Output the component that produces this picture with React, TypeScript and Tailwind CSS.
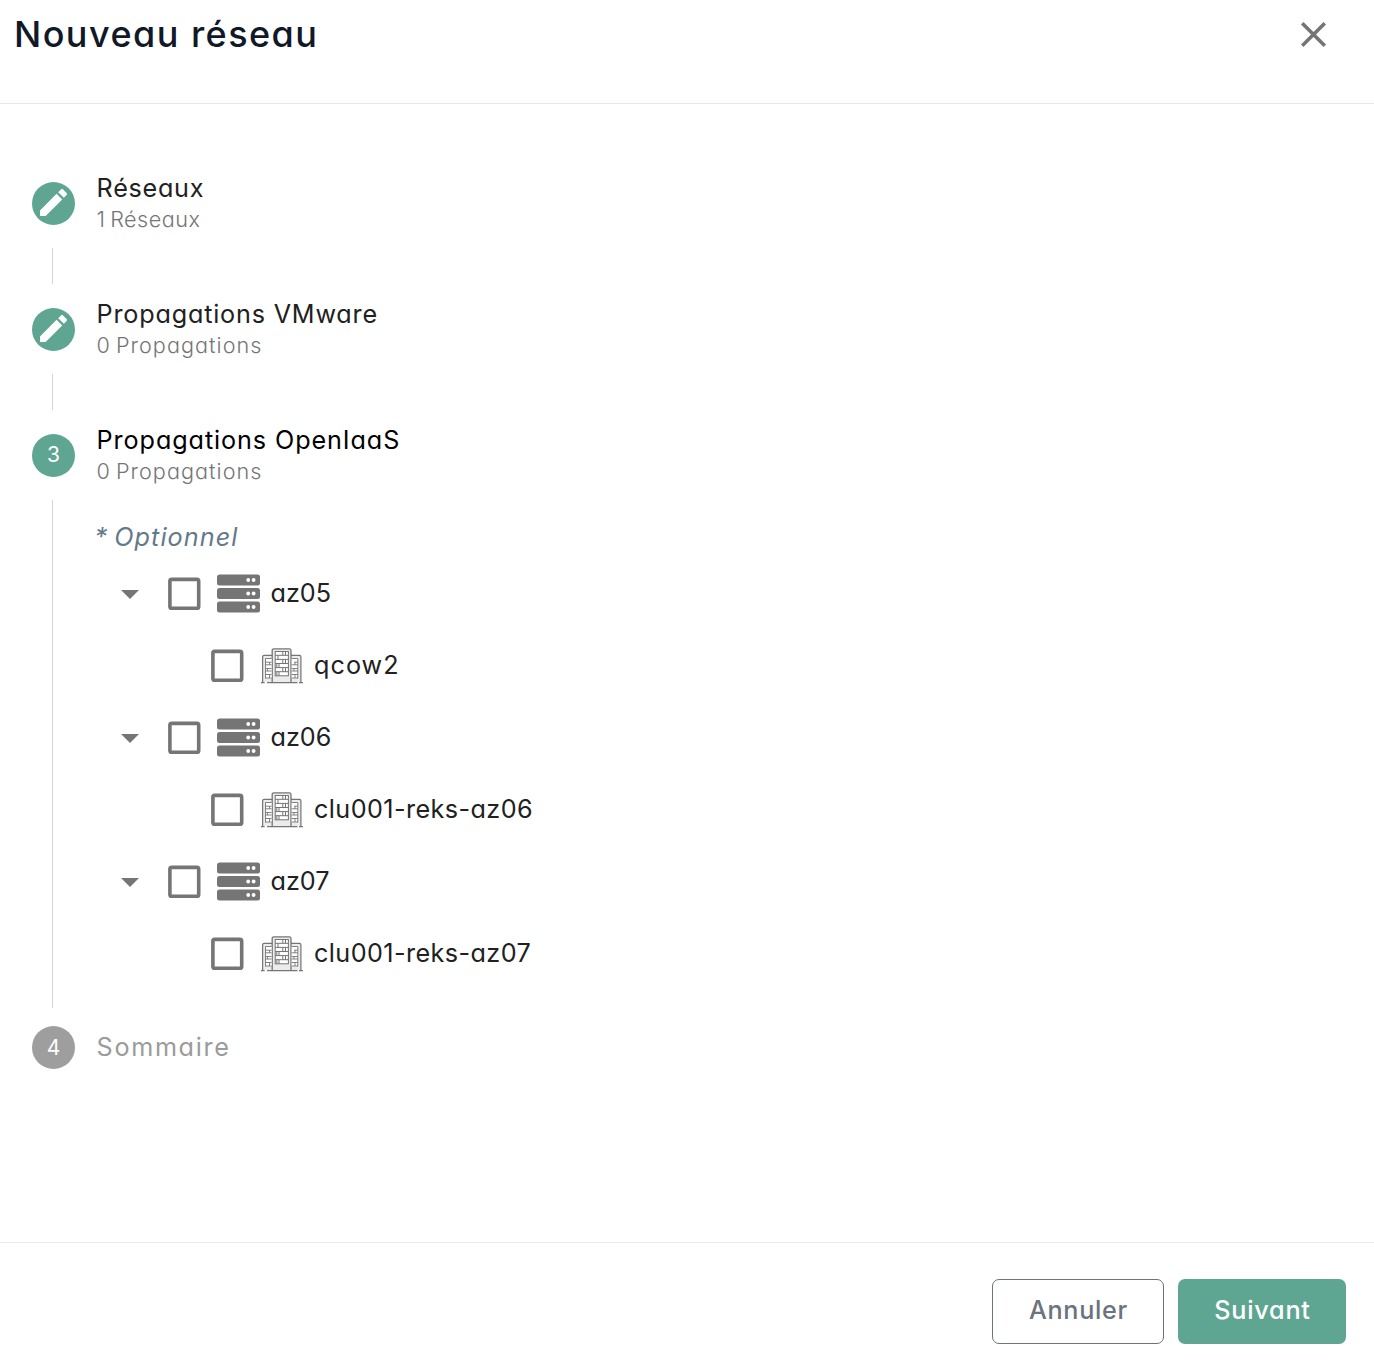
import type { ReactNode } from "react";

function CloseIcon() {
  return (
    <svg viewBox="0 0 24 24" className="h-[43px] w-[43px] fill-[#757575]">
      <path d="M19 6.41L17.59 5 12 10.59 6.41 5 5 6.41 10.59 12 5 17.59 6.41 19 12 13.41 17.59 19 19 17.59 13.41 12z" />
    </svg>
  );
}

function PencilIcon() {
  return (
    <svg viewBox="0.33 0.33 24 24" className="-mt-px h-9 w-9 fill-white">
      <path d="M3 17.25V21h3.75L17.81 9.94l-3.75-3.75L3 17.25zM20.71 7.04c.39-.39.39-1.02 0-1.41l-2.34-2.34c-.39-.39-1.02-.39-1.41 0l-1.83 1.83 3.75 3.75 1.83-1.83z" />
    </svg>
  );
}

function ServerIcon() {
  return (
    <svg viewBox="0 0 43 39" className="ml-4 h-[39px] w-[43px] shrink-0">
      {[0.6, 14.1, 27.6].map((y) => (
        <g key={y}>
          <rect x="0" y={y} width="43" height="11" rx="2.5" fill="#757575" />
          <circle cx="31.2" cy={y + 5.4} r="1.9" fill="#fff" />
          <circle cx="36.6" cy={y + 5.4} r="1.9" fill="#fff" />
        </g>
      ))}
    </svg>
  );
}

function BuildingIcon() {
  return (
    <svg viewBox="0 0 43 36" className="ml-[17px] mt-px h-9 w-[43px] shrink-0" fill="none" stroke="#757575">
      <path d="M1.6 34V9Q1.6 7.4 3.2 7.4H38.3Q39.9 7.4 39.9 9V34" fill="#ececec" strokeWidth="1.2" />
      <path d="M11.2 34V2.6Q11.2.8 13 .8H28.2Q30 .8 30 2.6V34" fill="#ececec" strokeWidth="1.3" />
      <path d="M0 34.6H3.6M6 34.6H36.5M38 34.6H42" strokeWidth="1.3" />
      <rect x="14.2" y="3.5" width="13.2" height="24.3" fill="#fff" />
      <path d="M14.2 7.3h13.2M14.2 11.4h13.2M14.2 15.5h13.2M14.2 19.6h13.2M14.2 23.7h13.2M21.8 3.5v3.8M24.5 3.5v3.8M17 7.3v4.1M21.8 11.4v4.1M24.5 11.4v4.1M15.8 15.5v4.1M18 15.5v4.1M21.8 19.6v4.1M24.5 19.6v4.1M15.8 23.7v4.1M18 23.7v4.1" />
      <path d="M4.6 10.5h6v20h-6zM30.7 10.5h6v20h-6z" fill="#fff" stroke="none" />
      <path d="M4.5 30.5V10.5H10.6M36.8 30.5V10.5H30.7M4.5 14.2h6.1M4.5 16.8h6.1M4.5 20.5h6.1M4.5 23h6.1M4.5 26.5h6.1M4.5 30h6.1M8.5 14.2v2.6M6.5 20.5v2.5M8.5 26.5v3.5M33 14.2h3.8M30.7 16.8h6.1M30.7 20.5h6.1M30.7 23h6.1M30.7 26.5h6.1M30.7 30h6.1M34 14.2v2.6M33 20.5v2.5M34 26.5v3.5" strokeWidth=".9" />
    </svg>
  );
}

function Checkbox() {
  return (
    <svg viewBox="0 0 33 33" role="checkbox" aria-checked="false" className="h-[33px] w-[33px] shrink-0">
      <rect x="1.9" y="2.4" width="28.8" height="28.8" rx="1.8" fill="none" stroke="#757575" strokeWidth="3.6" />
    </svg>
  );
}

function Caret() {
  return (
    <svg viewBox="0 0 18 9" className="ml-[25px] mr-[29px] mt-[2px] h-[9px] w-[18px] fill-[#757575]">
      <path d="M0 0h18L9 9z" />
    </svg>
  );
}

type StepProps = { badge: ReactNode; title: string; titleClass: string; subtitle: string; subtitleClass: string };

function Step({ badge, title, titleClass, subtitle, subtitleClass }: StepProps) {
  return (
    <div className="flex h-[90px] items-center gap-[22px] pl-8">
      <span className="flex h-[43px] w-[43px] items-center justify-center rounded-full bg-[#5fa692] text-[21px] text-white">{badge}</span>
      <div className="-ml-[0.4px] flex flex-col pt-px">
        <div className={`h-[31px] leading-[31px] ${titleClass}`}>{title}</div>
        <div className={`h-[31px] text-[21.6px] font-light leading-[31px] text-[#757575] ${subtitleClass}`}>{subtitle}</div>
      </div>
    </div>
  );
}

function Group({ name, child, childClass }: { name: string; child: string; childClass: string }) {
  return (
    <>
      <div className="flex h-[72px] items-center">
        <Caret />
        <Checkbox />
        <ServerIcon />
        <span className="ml-[10.5px] pt-[2px]">{name}</span>
      </div>
      <div className="flex h-[72px] items-center pl-[115px]">
        <Checkbox />
        <BuildingIcon />
        <span className={`ml-[10px] pt-[2px] ${childClass}`}>{child}</span>
      </div>
    </>
  );
}

export default function App() {
  return (
    <div className="flex h-[1362px] flex-col bg-white font-['Inter',sans-serif] text-[25.2px] text-[#212121] [font-feature-settings:'cv11']">
      <header className="flex h-[104px] items-start justify-between border-b border-[#e8e8e8] pl-[14px] pr-[39px] pt-[13px]">
        <h1 className="text-[36px] font-medium leading-[43px] tracking-[1.45px] text-[#111827]">Nouveau réseau</h1>
        <CloseIcon />
      </header>
      <main className="flex grow flex-col pt-[54px]">
        <Step
          badge={<PencilIcon />}
          title="Réseaux"
          titleClass="tracking-[0.7px]"
          subtitle="1 Réseaux"
          subtitleClass="tracking-[0.5px] [word-spacing:-2px]"
        />
        <div className="ml-[52px] h-9 w-px bg-[#d6d6d6]" />
        <Step
          badge={<PencilIcon />}
          title="Propagations VMware"
          titleClass="tracking-[0.8px]"
          subtitle="0 Propagations"
          subtitleClass="tracking-[1.05px] [word-spacing:-2.2px]"
        />
        <div className="ml-[52px] h-9 w-px bg-[#d6d6d6]" />
        <Step
          badge="3"
          title="Propagations OpenIaaS"
          titleClass="tracking-[0.9px] text-black"
          subtitle="0 Propagations"
          subtitleClass="tracking-[1.05px] [word-spacing:-2.2px]"
        />
        <div className="ml-[52px] h-[508px] border-l border-[#d6d6d6] pl-[43px] pt-[21px]">
          <div className="-ml-[1.5px] h-9 italic leading-8 tracking-[1.05px] text-[#64798a] [word-spacing:-2px]">* Optionnel</div>
          <Group name="az05" child="qcow2" childClass="tracking-[1.05px]" />
          <Group name="az06" child="clu001-reks-az06" childClass="tracking-[0.42px]" />
          <Group name="az07" child="clu001-reks-az07" childClass="tracking-[0.42px]" />
        </div>
        <div className="flex h-[78px] items-center gap-[22px] pl-8">
          <span className="flex h-[43px] w-[43px] items-center justify-center rounded-full bg-[#9e9e9e] pt-px text-[21px] text-white">4</span>
          <span className="-ml-[0.4px] pt-[2px] tracking-[1.65px] text-[#9b9b9b]">Sommaire</span>
        </div>
      </main>
      <footer className="flex h-[120px] items-start justify-end gap-[14px] border-t border-[#e8e8e8] pr-7 pt-9 font-medium">
        <button className="h-[65px] w-[172px] rounded-[7px] border border-[#6b7280] pb-[2px] pl-px tracking-[0.7px] text-[#6b7280]">Annuler</button>
        <button className="h-[65px] w-[168px] rounded-[7px] bg-[#5fa692] pb-[2px] pl-px tracking-[0.75px] text-white">Suivant</button>
      </footer>
    </div>
  );
}
